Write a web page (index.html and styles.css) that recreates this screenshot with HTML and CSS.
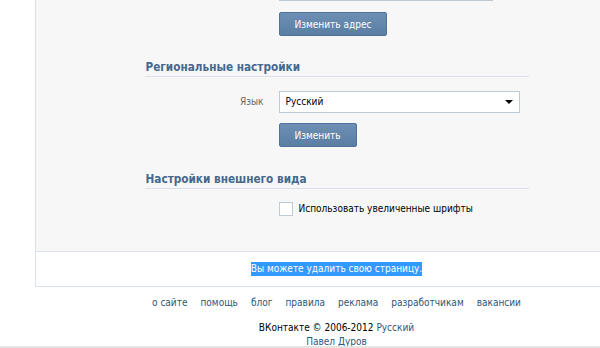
FILE: index.html
```html
<!DOCTYPE html>
<html lang="ru">
<head>
<meta charset="UTF-8">
<title>Настройки</title>
<link rel="stylesheet" href="styles.css">
</head>
<body>
<div class="page">
  <div class="panel">
    <div class="settings">
      <div class="row row-top">
        <span class="label"></span>
        <div class="text-input"></div>
      </div>
      <div class="row">
        <span class="label"></span>
        <button class="button">Изменить адрес</button>
      </div>

      <h2 class="section-title">Региональные настройки</h2>
      <div class="row row-select">
        <span class="label">Язык</span>
        <div class="select">
          <span>Русский</span>
          <span class="select-arrow"></span>
        </div>
      </div>
      <div class="row row-button">
        <span class="label"></span>
        <button class="button">Изменить</button>
      </div>

      <h2 class="section-title">Настройки внешнего вида</h2>
      <div class="row row-check">
        <span class="label"></span>
        <label class="checkbox"><span class="checkbox-box"></span>Использовать увеличенные шрифты</label>
      </div>
    </div>
    <div class="panel-foot">
      <span class="selected">Вы можете удалить свою страницу.</span>
    </div>
  </div>

  <div class="footer">
    <div class="footer-links">
      <a href="#">о сайте</a>
      <a href="#">помощь</a>
      <a href="#">блог</a>
      <a href="#">правила</a>
      <a href="#">реклама</a>
      <a href="#">разработчикам</a>
      <a href="#">вакансии</a>
    </div>
    <div class="copy">ВКонтакте © 2006-2012 <a href="#">Русский</a></div>
    <div class="author"><a href="#">Павел Дуров</a></div>
  </div>
</div>
<div class="bottom-line"></div>
</body>
</html>
```

FILE: styles.css
```css
body {
  margin: 0;
  background: #fff;
  font-family: Tahoma, "DejaVu Sans Condensed", "DejaVu Sans", sans-serif;
  font-stretch: condensed;
  font-size: 10px;
  line-height: 14px;
  color: #000;
  overflow: hidden;
}
a {
  color: #2b587a;
  text-decoration: none;
}
.page {
  height: 346px;
  overflow: hidden;
}
.panel {
  margin-left: 35px;
  width: 601px;
  border: 1px solid #dae1e8;
  border-top: none;
  background: #f7f7f7;
}
.settings {
  width: 384px;
  margin: 0 auto;
  padding-bottom: 35px;
}
.row {
  display: flex;
  align-items: center;
}
.label {
  width: 119px;
  padding-right: 15px;
  flex-shrink: 0;
  text-align: right;
  color: #666;
}
.row-top {
  margin-top: -23px;
}
.text-input {
  width: 212px;
  height: 22px;
  border: 1px solid #c0cad5;
  background: #fff;
}
.button {
  margin-top: 11px;
  height: 24px;
  padding: 0 15px;
  border: 1px solid #4e7299;
  border-radius: 2px;
  background: linear-gradient(#6d8fb3, #5a7ea4);
  color: #fff;
  font-family: inherit;
  font-stretch: condensed;
  font-size: 10px;
}
.row-button .button {
  margin-top: 10px;
}
.section-title {
  margin: 23px 0 0;
  padding: 0 0 1px 1px;
  font-size: 11.7px;
  line-height: 16px;
  color: #45688e;
  border-bottom: 1px solid #dae1e8;
}
.row-button + .section-title {
  margin-top: 24px;
}
.row-select {
  margin-top: 14px;
}
.select {
  width: 227px;
  height: 20px;
  padding: 0 6px;
  display: flex;
  align-items: center;
  justify-content: space-between;
  border: 1px solid #c0cad5;
  background: #fff;
}
.select-arrow {
  width: 0;
  height: 0;
  border-left: 4px solid transparent;
  border-right: 4px solid transparent;
  border-top: 4px solid #000;
}
.row-check {
  margin-top: 13px;
}
.checkbox {
  display: flex;
  align-items: center;
  gap: 6px;
}
.checkbox-box {
  width: 12px;
  height: 12px;
  border: 1px solid #c0cad5;
  background: #fff;
}
.panel-foot {
  height: 34px;
  display: flex;
  align-items: center;
  justify-content: center;
  border-top: 1px solid #dae1e8;
  background: #fff;
}
.selected {
  background: #3399ff;
  color: #fff;
}
.footer {
  margin-left: 35px;
  width: 603px;
  text-align: center;
}
.footer-links {
  margin-top: 9px;
  display: flex;
  justify-content: center;
  gap: 13px;
}
.copy {
  margin-top: 11px;
}
.bottom-line {
  height: 2px;
  background: #e4e4e4;
}
```
